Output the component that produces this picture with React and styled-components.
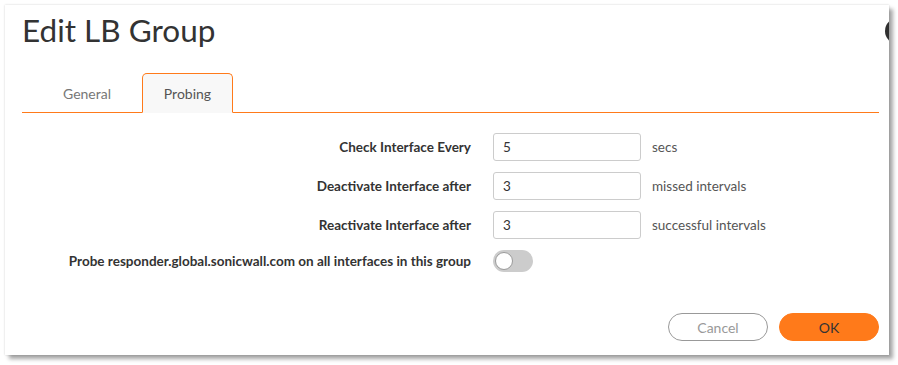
import React, { useState } from 'react';
import styled, { createGlobalStyle } from 'styled-components';

const orange = '#ff7a1a';

const GlobalStyle = createGlobalStyle`
  html, body {
    margin: 0;
    padding: 0;
    background: #ffffff;
    font-family: Lato, "Open Sans", "Liberation Sans", sans-serif;
  }
`;

const Page = styled.div`
  padding: 5px;
  width: 898px;
  height: 365px;
  box-sizing: border-box;
`;

const Dialog = styled.div`
  position: relative;
  overflow: hidden;
  width: 884px;
  height: 350px;
  box-sizing: border-box;
  background: #ffffff;
  box-shadow: 0 0 2px rgba(0, 0, 0, 0.18), 4px 4px 4px rgba(0, 0, 0, 0.35);
  padding: 0 10px 0 17px;
  display: flex;
  flex-direction: column;
`;

const CloseDot = styled.div`
  position: absolute;
  right: -22px;
  top: 13px;
  width: 26px;
  height: 26px;
  border-radius: 50%;
  background: #2f2f2f;
`;

const Title = styled.h1`
  margin: 0;
  padding-top: 2px;
  height: 46px;
  font-size: 31.5px;
  font-weight: 400;
  line-height: 46px;
  color: #333333;
`;

const TabBar = styled.div`
  display: flex;
  margin-top: 20px;
  border-bottom: 1px solid ${orange};
  height: 39px;
`;

const Tab = styled.div`
  box-sizing: border-box;
  width: ${({ $active }) => ($active ? '91px' : '120px')};
  padding-left: ${({ $active }) => ($active ? '0' : '10px')};
  margin-bottom: -1px;
  display: flex;
  align-items: center;
  justify-content: center;
  font-size: 14px;
  color: ${({ $active }) => ($active ? '#555555' : '#777777')};
  background: ${({ $active }) => ($active ? '#f8f8f8' : 'transparent')};
  border: 1px solid ${({ $active }) => ($active ? orange : 'transparent')};
  border-bottom: 1px solid ${({ $active }) => ($active ? '#f8f8f8' : 'transparent')};
  border-radius: 5px 5px 0 0;
  cursor: pointer;
`;

const Form = styled.div`
  display: grid;
  grid-template-columns: 449px 148px auto;
  column-gap: 22px;
  row-gap: 11px;
  margin-top: 20px;
  align-items: center;
`;

const Label = styled.div`
  text-align: right;
  font-size: 13.5px;
  font-weight: 700;
  color: #333333;
`;

const Input = styled.input`
  height: 28px;
  box-sizing: border-box;
  border: 1px solid #cccccc;
  border-radius: 3px;
  padding: 0 9px;
  font-family: inherit;
  font-size: 13.5px;
  color: #333333;
  outline: none;
`;

const Unit = styled.div`
  font-size: 13.5px;
  color: #555555;
  margin-left: -11px;
`;

const Switch = styled.button`
  width: 40px;
  height: 22px;
  padding: 0;
  border: none;
  border-radius: 11px;
  background: ${({ $on }) => ($on ? orange : '#cccccc')};
  display: flex;
  align-items: center;
  justify-content: ${({ $on }) => ($on ? 'flex-end' : 'flex-start')};
  cursor: pointer;

  &::after {
    content: "";
    width: 18px;
    height: 18px;
    margin: 0 2px;
    box-sizing: border-box;
    border-radius: 50%;
    background: #ffffff;
    border: 1px solid #9a9a9a;
  }
`;

const Footer = styled.div`
  margin-top: auto;
  margin-bottom: 14px;
  display: flex;
  justify-content: flex-end;
  gap: 11px;
`;

const Button = styled.button`
  width: 100px;
  height: 28px;
  border-radius: 14px;
  font-family: inherit;
  font-size: 14px;
  cursor: pointer;
  border: 1px solid ${({ $primary }) => ($primary ? orange : '#999999')};
  background: ${({ $primary }) => ($primary ? orange : '#ffffff')};
  color: ${({ $primary }) => ($primary ? '#333333' : '#999999')};
`;

const rows = [
  { label: 'Check Interface Every', value: '5', unit: 'secs' },
  { label: 'Deactivate Interface after', value: '3', unit: 'missed intervals' },
  { label: 'Reactivate Interface after', value: '3', unit: 'successful intervals' },
];

export default function App() {
  const [tab, setTab] = useState('probing');
  const [probe, setProbe] = useState(false);

  return (
    <Page>
      <GlobalStyle />
      <Dialog>
        <CloseDot />
        <Title>Edit LB Group</Title>
        <TabBar>
          <Tab $active={tab === 'general'} onClick={() => setTab('general')}>General</Tab>
          <Tab $active={tab === 'probing'} onClick={() => setTab('probing')}>Probing</Tab>
        </TabBar>
        <Form>
          {rows.map((r) => (
            <React.Fragment key={r.label}>
              <Label>{r.label}</Label>
              <Input defaultValue={r.value} />
              <Unit>{r.unit}</Unit>
            </React.Fragment>
          ))}
          <Label>Probe responder.global.sonicwall.com on all interfaces in this group</Label>
          <Switch $on={probe} onClick={() => setProbe(!probe)} />
          <span />
        </Form>
        <Footer>
          <Button>Cancel</Button>
          <Button $primary>OK</Button>
        </Footer>
      </Dialog>
    </Page>
  );
}
